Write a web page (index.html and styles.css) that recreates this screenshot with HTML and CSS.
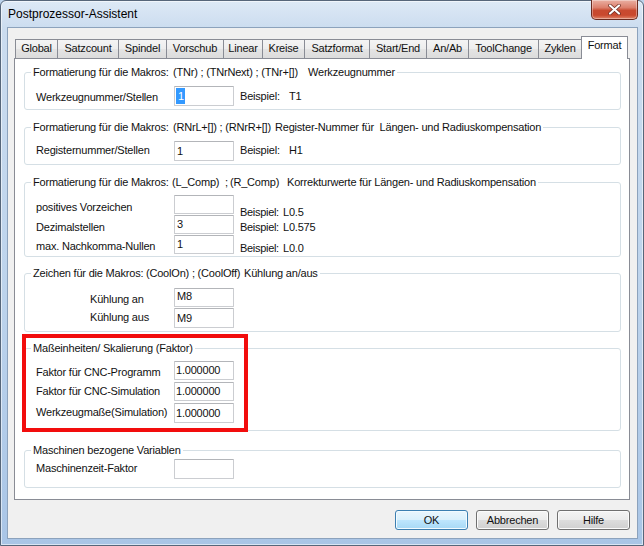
FILE: index.html
```html
<!DOCTYPE html>
<html>
<head>
<meta charset="utf-8">
<link rel="stylesheet" href="styles.css">
</head>
<body>
<div class="window">
  <div class="titlebar">
    <span class="title">Postprozessor-Assistent</span>
    <div class="close">
      <svg width="13" height="11" viewBox="0 0 13 11">
        <path d="M2 1.5 L11 9.5 M11 1.5 L2 9.5" stroke="#6a2a20" stroke-width="3.6" stroke-linecap="round" fill="none"/>
        <path d="M2 1.5 L11 9.5 M11 1.5 L2 9.5" stroke="#ffffff" stroke-width="2.2" stroke-linecap="round" fill="none"/>
      </svg>
    </div>
  </div>
  <div class="client">
    <div class="tabs">
      <div class="tab t43">Global</div>
      <div class="tab t62">Satzcount</div>
      <div class="tab t49">Spindel</div>
      <div class="tab t58">Vorschub</div>
      <div class="tab t40">Linear</div>
      <div class="tab t43">Kreise</div>
      <div class="tab t66">Satzformat</div>
      <div class="tab t58">Start/End</div>
      <div class="tab t43">An/Ab</div>
      <div class="tab t71">ToolChange</div>
      <div class="tab t44">Zyklen</div>
      <div class="tab t47 sel">Format</div>
    </div>
    <div class="panel">
      <div class="group g1">
        <div class="legend"><span class="w140">Formatierung für die Makros:</span><span class="w135">(TNr) ; (TNrNext) ; (TNr+[])</span><span>Werkzeugnummer</span></div>
        <div class="row r6">
          <div class="lbl p4">Werkzeugnummer/Stellen</div>
          <div class="tb"><span class="hl">1</span></div>
          <div class="bsp p3">Beispiel:</div>
          <div class="val p3">T1</div>
        </div>
      </div>
      <div class="group g2">
        <div class="legend"><span class="w140">Formatierung für die Makros:</span><span class="w102">(RNrL+[]) ; (RNrR+[])</span><span>Register-Nummer für  Längen- und Radiuskompensation</span></div>
        <div class="row r6">
          <div class="lbl p2">Registernummer/Stellen</div>
          <div class="tb">1</div>
          <div class="bsp p2">Beispiel:</div>
          <div class="val p2">H1</div>
        </div>
      </div>
      <div class="group g3">
        <div class="legend"><span class="w139">Formatierung für die Makros:</span><span class="w58">(L_Comp)  ;</span><span class="w57">(R_Comp)</span><span>Korrekturwerte für Längen- und Radiuskompensation</span></div>
        <div class="row r5 h20">
          <div class="lbl p5">positives Vorzeichen</div>
          <div class="tb h19"></div>
          <div class="bsp p10">Beispiel:</div>
          <div class="val p10">L0.5</div>
        </div>
        <div class="row h20">
          <div class="lbl p5">Dezimalstellen</div>
          <div class="tb h19">3</div>
          <div class="bsp p5">Beispiel:</div>
          <div class="val p5">L0.575</div>
        </div>
        <div class="row h20">
          <div class="lbl p4">max. Nachkomma-Nullen</div>
          <div class="tb h19">1</div>
          <div class="bsp p6">Beispiel:</div>
          <div class="val p6">L0.0</div>
        </div>
      </div>
      <div class="group g4">
        <div class="legend"><span class="w113">Zeichen für die Makros:</span><span class="w98">(CoolOn) ; (CoolOff)</span><span>Kühlung an/aus</span></div>
        <div class="row r7 h20">
          <div class="lbl indent p4">Kühlung an</div>
          <div class="tb h19 up">M8</div>
        </div>
        <div class="row h20">
          <div class="lbl indent p2">Kühlung aus</div>
          <div class="tb">M9</div>
        </div>
      </div>
      <div class="group g5">
        <div class="legend">Maßeinheiten/ Skalierung (Faktor)</div>
        <div class="row r5 h21">
          <div class="lbl p4">Faktor für CNC-Programm</div>
          <div class="tb h19 num">1.000000</div>
        </div>
        <div class="row h21">
          <div class="lbl p2">Faktor für CNC-Simulation</div>
          <div class="tb h19 num">1.000000</div>
        </div>
        <div class="row h21">
          <div class="lbl p2">Werkzeugmaße(Simulation)</div>
          <div class="tb num">1.000000</div>
        </div>
        <div class="redmark"></div>
      </div>
      <div class="group g6">
        <div class="legend">Maschinen bezogene Variablen</div>
        <div class="row r1">
          <div class="lbl p2">Maschinenzeit-Faktor</div>
          <div class="tb"></div>
        </div>
      </div>
    </div>
    <div class="buttons">
      <div class="btn def">OK</div>
      <div class="btn">Abbrechen</div>
      <div class="btn">Hilfe</div>
    </div>
  </div>
</div>
</body>
</html>
```
FILE: styles.css
```css
* { box-sizing: border-box; }
html, body { margin: 0; padding: 0; }
body {
  width: 644px;
  height: 546px;
  overflow: hidden;
  font-family: "Liberation Sans", Arial, sans-serif;
  font-size: 11px;
  letter-spacing: -0.2px;
  color: #111;
  background: #bcd3ec;
}
.window {
  width: 644px;
  height: 546px;
  border: 1px solid #56667a;
  border-radius: 6px 6px 0 0;
  padding: 0 5px 6px 6px;
  background: linear-gradient(180deg, #dde9f6 0, #cbdcef 28px, #bcd3ec 55%, #a9c5e6 100%);
  box-shadow: inset 0 0 0 1px rgba(255,255,255,0.55);
  display: flex;
  flex-direction: column;
}
.titlebar {
  height: 26px;
  flex: none;
  display: flex;
  align-items: flex-start;
}
.title {
  font-size: 12px;
  letter-spacing: 0;
  line-height: 15px;
  margin: 6px 0 0 1px;
  color: #000;
}
.close {
  margin-left: auto;
  margin-top: -1px;
  width: 47px;
  height: 20px;
  border: 1px solid #6b2b20;
  border-top: none;
  border-radius: 0 0 5px 5px;
  background: linear-gradient(180deg, #eab0a3 0, #dc7f6c 40%, #c84a30 55%, #c9492e 80%, #e0866b 100%);
  box-shadow: inset 0 0 0 1px rgba(255,255,255,0.35);
  display: flex;
  align-items: center;
  justify-content: center;
}
.client {
  flex: 1;
  border: 1px solid #8ca2bc;
  background: #f0f0f0;
  display: flex;
  flex-direction: column;
}
.tabs {
  display: flex;
  align-items: flex-end;
  height: 22px;
  margin: 8px 0 0 7px;
  flex: none;
}
.tab {
  flex: none;
  height: 19px;
  padding: 0;
  text-align: center;
  border: 1px solid #898c95;
  border-bottom: none;
  background: linear-gradient(180deg, #f4f4f4 0, #ededed 50%, #e4e4e4 51%, #dcdcdc 100%);
  line-height: 17px;
  margin-left: -1px;
  white-space: nowrap;
}
.tab:first-child { margin-left: 0; }
.t40 { width: 40px; }
.t43 { width: 43px; }
.t44 { width: 44px; }
.t47 { width: 47px; }
.t49 { width: 49px; }
.t58 { width: 58px; }
.t62 { width: 62px; }
.t66 { width: 66px; }
.t71 { width: 71px; }
.tab.sel {
  height: 23px;
  margin-bottom: -1px;
  background: #fff;
  position: relative;
  z-index: 1;
}
.panel {
  height: 442px;
  flex: none;
  margin: 0 7px 0 6px;
  border: 1px solid #898c95;
  background: #fff;
  padding: 0 8px 0 9px;
}
.group {
  border: 1px solid #d5dfe5;
  border-radius: 3px;
  padding: 0 0 0 11px;
}
.g1 { margin-top: 13px; height: 38px; }
.g2 { margin-top: 17px; height: 38px; }
.g3 { margin-top: 17px; height: 75px; }
.g4 { margin-top: 16px; height: 59px; }
.g5 { margin-top: 16px; height: 83px; position: relative; }
.g6 { margin-top: 19px; height: 38px; }
.legend {
  width: fit-content;
  margin: -8px 0 0 -5px;
  padding: 0 2px;
  background: #fff;
  line-height: 15px;
  white-space: pre;
}
.legend span { display: inline-block; white-space: pre; }
.w140 { width: 140px; }
.w139 { width: 139px; }
.w135 { width: 135px; }
.w113 { width: 113px; }
.w102 { width: 102px; }
.w98 { width: 98px; }
.w58 { width: 58px; }
.w57 { width: 57px; }
.row {
  display: flex;
  align-items: flex-start;
  height: 20px;
}
.r1 { margin-top: 1px; }
.r5 { margin-top: 5px; }
.r6 { margin-top: 6px; }
.r7 { margin-top: 7px; }
.h20 { height: 20px; }
.h21 { height: 21px; }
.lbl {
  width: 138px;
  line-height: 15px;
  white-space: nowrap;
}
.lbl.indent { width: 84px; margin-left: 54px; }
.bsp, .val { line-height: 15px; white-space: nowrap; }
.bsp { margin-left: 6px; width: 49px; }
.g3 .bsp { width: 43px; letter-spacing: -0.3px; }
.p2 { padding-top: 2px; }
.p3 { padding-top: 3px; }
.p4 { padding-top: 4px; }
.p5 { padding-top: 5px; }
.p6 { padding-top: 6px; }
.p10 { padding-top: 10px; }
.tb {
  width: 60px;
  height: 20px;
  border: 1px solid #cbcdd1;
  border-top-color: #b3b5b9;
  border-radius: 1px;
  background: #fff;
  padding: 0 0 0 2px;
  line-height: 18px;
  white-space: nowrap;
}
.tb.h19 { height: 19px; line-height: 17px; }
.tb.up { line-height: 14px; }
.tb.num { padding-left: 1px; }
.hl {
  display: inline-block;
  margin-left: -1px;
  margin-top: 1px;
  padding: 0 1px 0 2px;
  line-height: 16px;
  background: #3399ff;
  color: #fff;
  vertical-align: top;
}
.redmark {
  position: absolute;
  left: -3px;
  top: -15px;
  width: 226px;
  height: 98px;
  border: 4px solid #f20d0d;
  pointer-events: none;
}
.buttons {
  display: flex;
  justify-content: flex-end;
  gap: 8px;
  margin: 10px 7px 0 0;
  flex: none;
}
.btn {
  width: 73px;
  height: 20px;
  border: 1px solid #707070;
  border-radius: 3px;
  background: linear-gradient(180deg, #f4f4f4 0, #ebebeb 50%, #dddddd 51%, #d0d0d0 100%);
  box-shadow: inset 0 0 0 1px #fbfbfb;
  text-align: center;
  line-height: 18px;
}
.btn.def {
  border-color: #3c7fb1;
  background: linear-gradient(180deg, #eaf6fd 0, #d9f0fc 50%, #bee6fd 51%, #a7d9f5 100%);
  box-shadow: inset 0 0 0 1px #f2fbff;
}
```
